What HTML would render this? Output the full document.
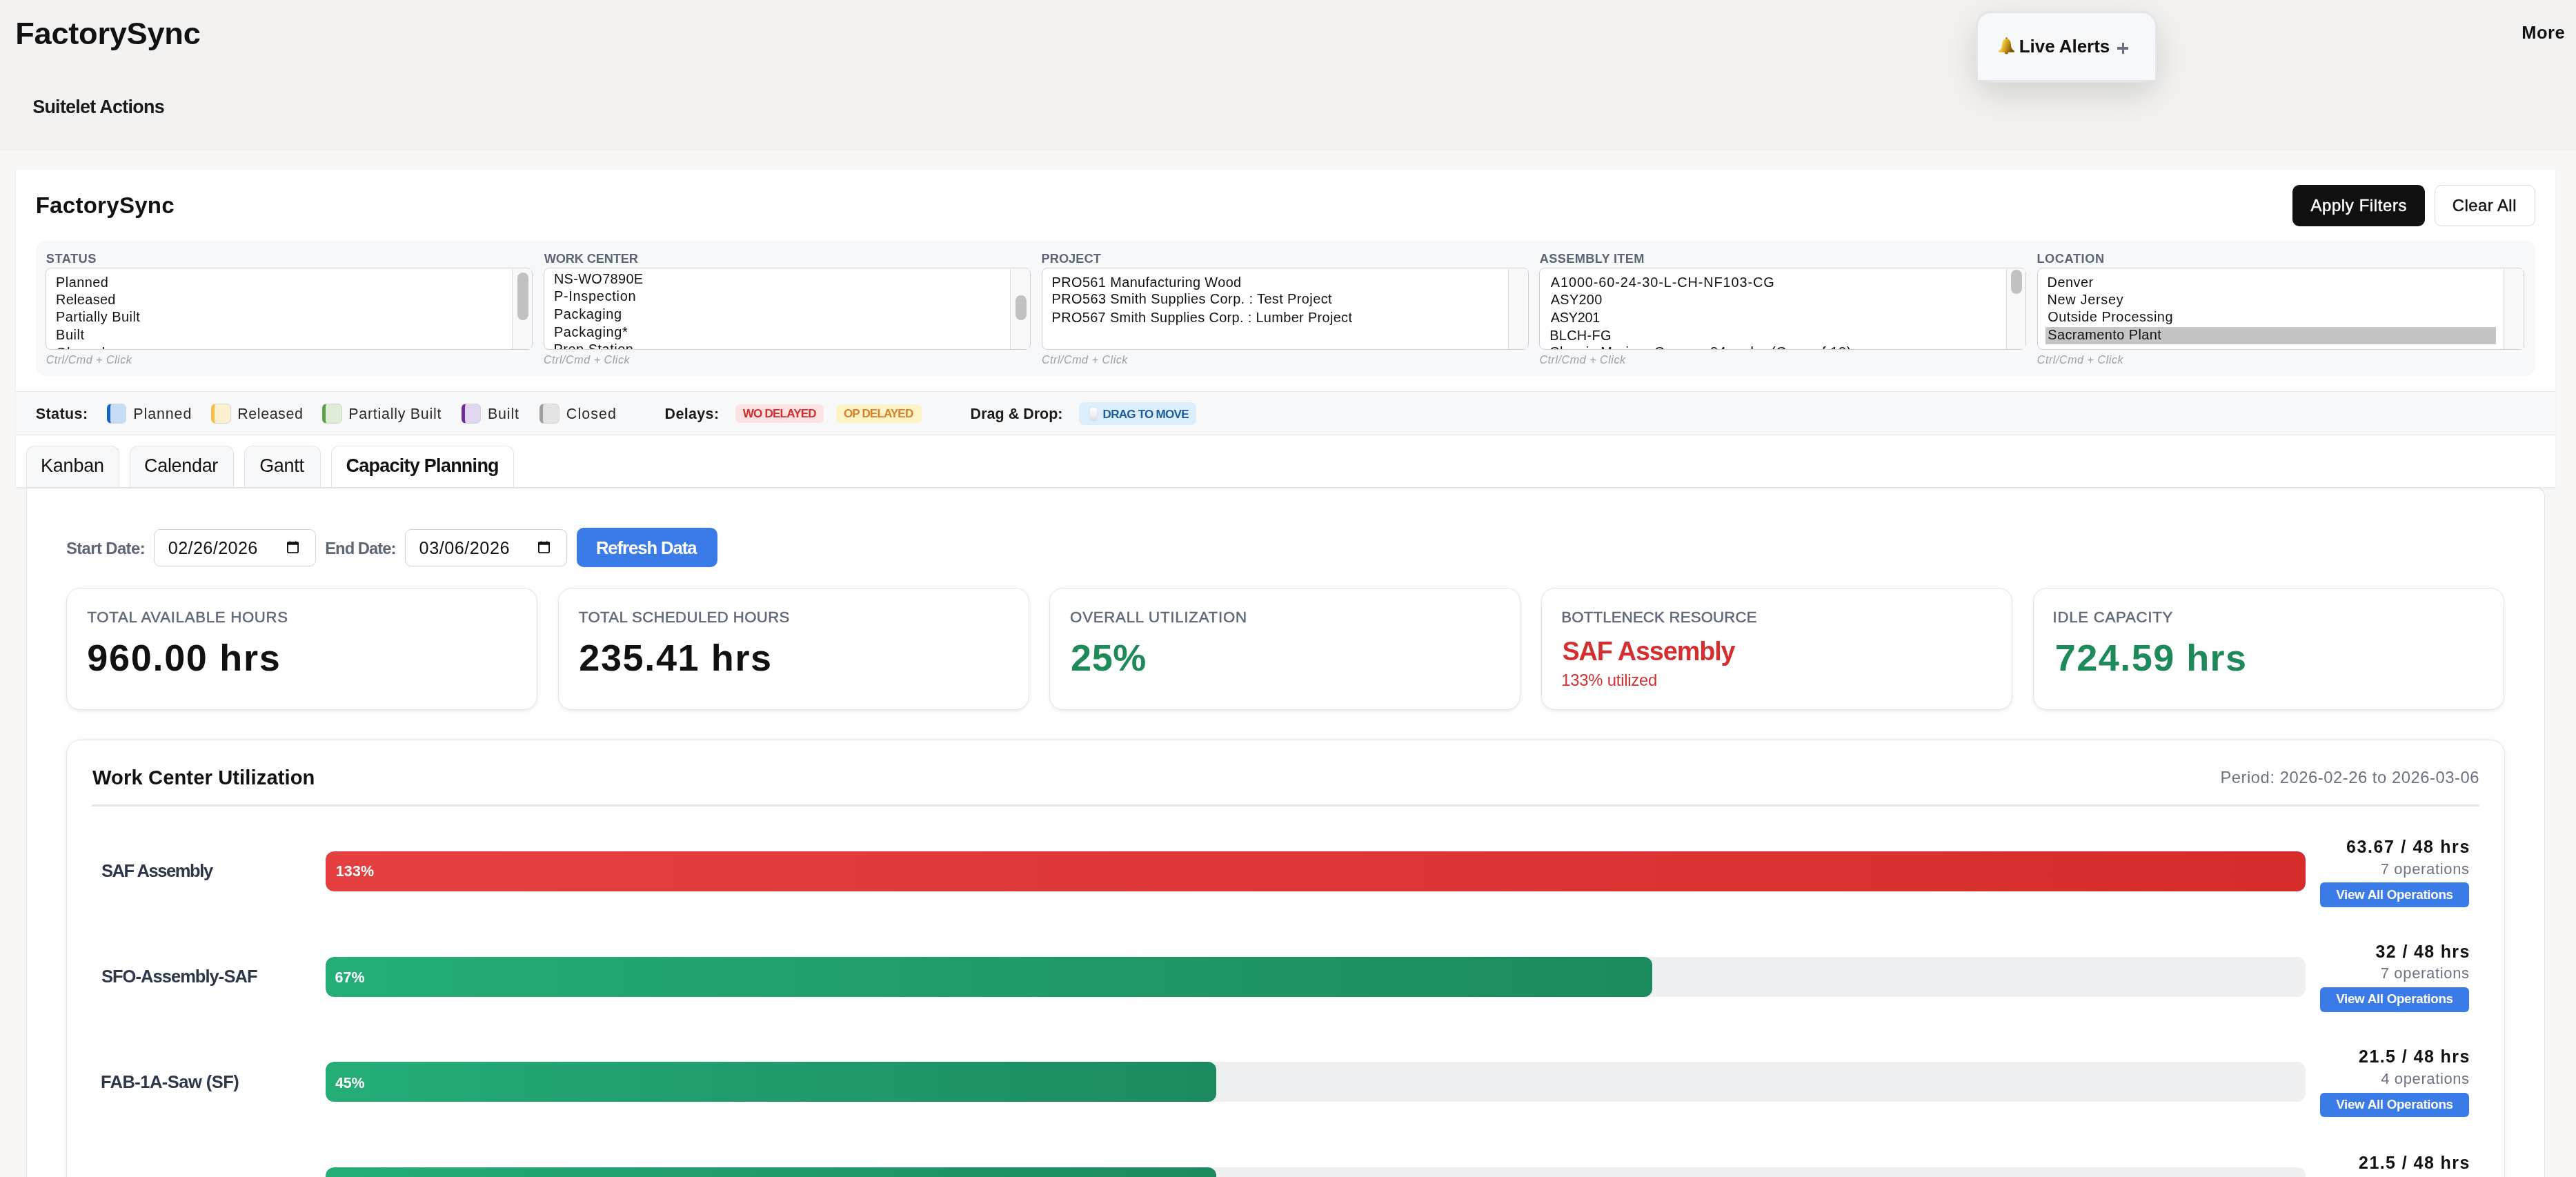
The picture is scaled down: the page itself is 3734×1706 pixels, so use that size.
<!DOCTYPE html>
<html><head><meta charset="utf-8">
<style>
html,body{margin:0;padding:0;}
body{width:3734px;height:1706px;overflow:hidden;position:relative;background:#f8f7f5;font-family:"Liberation Sans",sans-serif;}
.a{position:absolute;box-sizing:border-box;}
.t{position:absolute;white-space:pre;font-family:"Liberation Sans",sans-serif;}
.sel{position:absolute;box-sizing:border-box;background:#fff;border:1.5px solid #c9ced7;border-radius:8px;overflow:hidden;will-change:transform;}
.track{position:absolute;box-sizing:border-box;width:28px;background:#f8f8f8;border-left:1.5px solid #dadada;}
.thumb{position:absolute;left:6.9px;width:16px;border-radius:8px;background:#c1c1c1;}
.sw{position:absolute;box-sizing:border-box;width:28.6px;height:28.2px;border-radius:6.5px;border:1px solid #d3d3d3;border-left-width:5px;}
.tab{position:absolute;box-sizing:border-box;top:646.4px;height:61px;border:1.5px solid #e1e4e9;border-bottom:none;border-radius:12px 12px 0 0;background:#f7f8fa;}
.kpi{position:absolute;box-sizing:border-box;top:851.6px;width:683px;height:177px;border:1.5px solid #e1e4ea;border-radius:20px;background:#fff;box-shadow:0 2px 5px rgba(0,0,0,0.07);}
.bar{position:absolute;left:471.6px;width:2870.4px;height:57.5px;border-radius:12px;background:#eff0f2;overflow:hidden;}
.fillg{position:absolute;left:0;top:0;bottom:0;border-radius:12px;background:linear-gradient(90deg,#25ad78,#1b8a5f);}
.btn{position:absolute;box-sizing:border-box;left:3363px;width:215.8px;height:35.3px;border-radius:6px;background:#3b7be8;}
</style></head><body>
<!-- header -->
<div class="a" style="left:0;top:0;width:3734px;height:218px;background:#f3f2f0"></div>
<div class="a" style="left:2863.5px;top:16px;width:263.3px;height:103.6px;border-radius:22px;background:#e3e5ea;box-shadow:0 16px 48px rgba(0,0,0,0.15)"></div>
<div class="a" style="left:2866.5px;top:19px;width:257.3px;height:97.2px;border-radius:19px 19px 0 0;background:#f7f8fa"></div>
<div class="a" style="left:2896px;top:54px;width:25px;height:25px;">
<svg width="25" height="25" viewBox="0 0 25 25"><defs><linearGradient id="bg1" x1="0" y1="0" x2="1" y2="0.3"><stop offset="0" stop-color="#8a5a00"/><stop offset="0.3" stop-color="#f5d547"/><stop offset="0.55" stop-color="#d9a520"/><stop offset="1" stop-color="#7a4e05"/></linearGradient></defs>
<ellipse cx="12.5" cy="22.6" rx="2.6" ry="2" fill="#9a6a10"/><circle cx="12.5" cy="1.6" r="1.5" fill="#a87a12"/><path d="M12.5 2.2 C8 2.2 6.2 6.5 6 11 C5.8 15.5 4.5 17.5 0.8 20 Q0.5 21.6 2.5 21.8 L22.5 21.8 Q24.5 21.6 24.2 20 C20.5 17.5 19.2 15.5 19 11 C18.8 6.5 17 2.2 12.5 2.2 Z" fill="url(#bg1)"/></svg></div>
<div class="a" style="left:3069px;top:68.4px;width:16.2px;height:3.2px;background:#687080"></div>
<div class="a" style="left:3075.5px;top:61.9px;width:3.2px;height:16px;background:#687080"></div>
<!-- card -->
<div class="a" style="left:23px;top:246px;width:3681px;height:461px;background:#fff;box-shadow:0 1px 3px rgba(0,0,0,0.05)"></div>
<div class="a" style="left:52px;top:349.2px;width:3623px;height:196px;border-radius:14px;background:#f7f8fa"></div>
<div class="a" style="left:3322.8px;top:268.2px;width:192px;height:59.6px;border-radius:10px;background:#111"></div>
<div class="a" style="left:3529.3px;top:268.2px;width:145.4px;height:59.6px;border-radius:10px;background:#fff;border:1.5px solid #d6dae1"></div>
<div class="sel" style="left:66.2px;top:388.2px;width:705.7px;height:119.4px;"><span class="t" style="left:13.90px;top:113.04px;font-size:19.92px;line-height:19.92px;letter-spacing:1.837px;color:#111;font-weight:400;">Closed</span></div><div class="track" style="left:742.4px;top:389.7px;height:116.4px"><div class="thumb" style="top:5.3px;height:69.5px"></div></div><div class="sel" style="left:787.9px;top:388.2px;width:705.7px;height:119.4px;"><span class="t" style="left:13.50px;top:107.74px;font-size:19.92px;line-height:19.92px;letter-spacing:0.525px;color:#111;font-weight:400;">Prep Station</span></div><div class="track" style="left:1464.1px;top:389.7px;height:116.4px"><div class="thumb" style="top:38.2px;height:35.7px"></div></div><div class="sel" style="left:1509.6px;top:388.2px;width:705.7px;height:119.4px;"></div><div class="track" style="left:2185.8px;top:389.7px;height:116.4px"></div><div class="sel" style="left:2231.3px;top:388.2px;width:705.7px;height:119.4px;"><span class="t" style="left:14.00px;top:112.44px;font-size:19.92px;line-height:19.92px;letter-spacing:0.584px;color:#111;font-weight:400;">Classic Mariner Canoe - 24 cedar (Case of 12)</span></div><div class="track" style="left:2907.5px;top:389.7px;height:116.4px"><div class="thumb" style="top:1.3px;height:35px"></div></div><div class="sel" style="left:2953.0px;top:388.2px;width:705.7px;height:119.4px;"><div style="position:absolute;left:10.5px;top:84.7px;width:653.8px;height:25.2px;background:#c5c5c5"></div></div><div class="track" style="left:3629.2px;top:389.7px;height:116.4px"></div>
<!-- legend -->
<div class="a" style="left:23px;top:567px;width:3681px;height:63.8px;background:#f7f8fa;border-top:1.5px solid #e3e6eb;border-bottom:1.5px solid #e3e6eb"></div>
<div class="sw" style="left:154.8px;top:585.4px;background:#c6def5;border-left-color: #1565c0"></div>
<div class="sw" style="left:306.2px;top:585.4px;background:#fdf0cf;border-left-color: #f5bf45"></div>
<div class="sw" style="left:467.2px;top:585.4px;background:#dcecd5;border-left-color: #5a9e47"></div>
<div class="sw" style="left:668.8px;top:585.4px;background:#e1d5ef;border-left-color: #6a2c9a"></div>
<div class="sw" style="left:782px;top:585.4px;background:#e3e3e3;border-left-color: #9e9e9e"></div>
<div class="a" style="left:1065.7px;top:585.8px;width:128px;height:27px;border-radius:7px;background:#fde2e2"></div>
<div class="a" style="left:1212px;top:585.8px;width:123.7px;height:27px;border-radius:7px;background:#fef2c7"></div>
<div class="a" style="left:1564.2px;top:583px;width:170.2px;height:33px;border-radius:8px;background:#dcedfb"></div>
<div class="a" style="left:1579.4px;top:590.3px;width:11.2px;height:19px;border-radius:4px;background:linear-gradient(180deg,#ffffff,#f1f2f4 55%,#dfe0e3);border:0.6px solid #e6e6e6;box-shadow:0 0.5px 1px rgba(0,0,0,0.08)"></div>
<!-- tabs -->
<div class="a" style="left:23px;top:705.8px;width:3681px;height:1.2px;background:#e5e7eb"></div>
<div class="tab" style="left:38.4px;width:134.2px"></div>
<div class="tab" style="left:187.6px;width:151.7px"></div>
<div class="tab" style="left:354.3px;width:110.4px"></div>
<div class="tab" style="left:480.4px;width:264.2px;background:#fff"></div>
<!-- content panel -->
<div class="a" style="left:38.3px;top:706px;width:3650.7px;height:1100px;background:#fefefe;border:1.5px solid #e1e4e9;border-top:2px solid #dfe2e8;border-radius:0 13px 0 0"></div>
<!-- date row -->
<div class="a" style="left:222.8px;top:766.6px;width:235.4px;height:54.8px;border-radius:9px;border:1.5px solid #cdd2da;background:#fff"></div>
<div class="a" style="left:586.6px;top:766.6px;width:235.4px;height:54.8px;border-radius:9px;border:1.5px solid #cdd2da;background:#fff"></div>
<svg class="a" style="left:416.2px;top:783.2px" width="17" height="19" viewBox="0 0 17 19"><rect x="0.95" y="3.4" width="15.1" height="14.7" rx="1.6" fill="none" stroke="#111" stroke-width="1.9"/><rect x="0" y="2.5" width="17" height="4.2" rx="1" fill="#111"/><path d="M3.3 3 L4.1 0.3 L5 3 Z M11.9 3 L12.8 0.3 L13.7 3 Z" fill="#111"/></svg>
<svg class="a" style="left:779.9px;top:783.2px" width="17" height="19" viewBox="0 0 17 19"><rect x="0.95" y="3.4" width="15.1" height="14.7" rx="1.6" fill="none" stroke="#111" stroke-width="1.9"/><rect x="0" y="2.5" width="17" height="4.2" rx="1" fill="#111"/><path d="M3.3 3 L4.1 0.3 L5 3 Z M11.9 3 L12.8 0.3 L13.7 3 Z" fill="#111"/></svg>
<div class="a" style="left:836px;top:765px;width:203.7px;height:57.2px;border-radius:10px;background:#3b7be8"></div>
<!-- KPI cards -->
<div class="kpi" style="left:95.7px"></div>
<div class="kpi" style="left:808.6px"></div>
<div class="kpi" style="left:1521.4px"></div>
<div class="kpi" style="left:2234.2px"></div>
<div class="kpi" style="left:2947.0px"></div>
<!-- WCU card -->
<div class="a" style="left:95.7px;top:1071.5px;width:3535.7px;height:800px;border-radius:21px;border:1.5px solid #e1e4ea;background:#fff;box-shadow:0 1px 6px rgba(0,0,0,0.07)"></div>
<div class="a" style="left:133px;top:1166px;width:3461px;height:3px;background:#e3e6eb"></div>
<div class="bar" style="top:1234.2px"><div class="fillg" style="width:100%;background:linear-gradient(90deg,#e53f3f,#d62c2c)"></div></div>
<div class="bar" style="top:1387.3px"><div class="fillg" style="width:1923.4px"></div></div>
<div class="bar" style="top:1539.3px"><div class="fillg" style="width:1291.6px"></div></div>
<div class="bar" style="top:1692.2px"><div class="fillg" style="width:1291.6px"></div></div>
<div class="btn" style="top:1279.4px"></div>
<div class="btn" style="top:1431.3px"></div>
<div class="btn" style="top:1584px"></div>
<div class="btn" style="top:1737px"></div>
<div id="tx" style="position:absolute;left:0;top:0;width:3734px;height:1706px;will-change:transform">
<span class="t" style="left:22.28px;top:25.97px;font-size:45.16px;line-height:45.16px;letter-spacing:-0.253px;color:#111;font-weight:700;">FactorySync</span>
<span class="t" style="left:47.18px;top:141.71px;font-size:26.93px;line-height:26.93px;letter-spacing:-0.725px;color:#1a1a1a;font-weight:700;">Suitelet Actions</span>
<span class="t" style="left:2926.77px;top:54.32px;font-size:26.09px;line-height:26.09px;letter-spacing:-0.090px;color:#111;font-weight:700;">Live Alerts</span>
<span class="t" style="left:3655.20px;top:35.29px;font-size:25.53px;line-height:25.53px;letter-spacing:0.537px;color:#111;font-weight:700;">More</span>
<span class="t" style="left:51.63px;top:280.78px;font-size:33.10px;line-height:33.10px;letter-spacing:0.252px;color:#111;font-weight:700;">FactorySync</span>
<span class="t" style="left:3349.50px;top:285.82px;font-size:23.84px;line-height:23.84px;letter-spacing:0.655px;color:#fff;font-weight:400;-webkit-text-stroke:0.45px #fff;">Apply Filters</span>
<span class="t" style="left:3554.80px;top:285.82px;font-size:23.84px;line-height:23.84px;letter-spacing:0.488px;color:#111;font-weight:400;-webkit-text-stroke:0.45px #111;">Clear All</span>
<span class="t" style="left:66.80px;top:365.57px;font-size:18.23px;line-height:18.23px;letter-spacing:0.488px;color:#5b6574;font-weight:700;">STATUS</span>
<span class="t" style="left:788.70px;top:365.57px;font-size:18.23px;line-height:18.23px;letter-spacing:-0.147px;color:#5b6574;font-weight:700;">WORK CENTER</span>
<span class="t" style="left:1509.50px;top:365.57px;font-size:18.23px;line-height:18.23px;letter-spacing:0.038px;color:#5b6574;font-weight:700;">PROJECT</span>
<span class="t" style="left:2231.80px;top:365.57px;font-size:18.23px;line-height:18.23px;letter-spacing:0.321px;color:#5b6574;font-weight:700;">ASSEMBLY ITEM</span>
<span class="t" style="left:2952.40px;top:365.57px;font-size:18.23px;line-height:18.23px;letter-spacing:0.560px;color:#5b6574;font-weight:700;">LOCATION</span>
<span class="t" style="left:81.00px;top:399.84px;font-size:19.92px;line-height:19.92px;letter-spacing:0.465px;color:#111;font-weight:400;">Planned</span>
<span class="t" style="left:81.00px;top:424.84px;font-size:19.92px;line-height:19.92px;letter-spacing:0.334px;color:#111;font-weight:400;">Released</span>
<span class="t" style="left:81.00px;top:450.14px;font-size:19.92px;line-height:19.92px;letter-spacing:0.488px;color:#111;font-weight:400;">Partially Built</span>
<span class="t" style="left:81.00px;top:476.04px;font-size:19.92px;line-height:19.92px;letter-spacing:0.598px;color:#111;font-weight:400;">Built</span>
<span class="t" style="left:802.90px;top:394.64px;font-size:19.92px;line-height:19.92px;letter-spacing:0.346px;color:#111;font-weight:400;">NS-WO7890E</span>
<span class="t" style="left:802.90px;top:420.34px;font-size:19.92px;line-height:19.92px;letter-spacing:0.735px;color:#111;font-weight:400;">P-Inspection</span>
<span class="t" style="left:802.90px;top:445.54px;font-size:19.92px;line-height:19.92px;letter-spacing:0.647px;color:#111;font-weight:400;">Packaging</span>
<span class="t" style="left:802.90px;top:471.54px;font-size:19.92px;line-height:19.92px;letter-spacing:0.689px;color:#111;font-weight:400;">Packaging*</span>
<span class="t" style="left:1524.60px;top:400.14px;font-size:19.92px;line-height:19.92px;letter-spacing:0.391px;color:#111;font-weight:400;">PRO561 Manufacturing Wood</span>
<span class="t" style="left:1524.60px;top:424.44px;font-size:19.92px;line-height:19.92px;letter-spacing:0.411px;color:#111;font-weight:400;">PRO563 Smith Supplies Corp. : Test Project</span>
<span class="t" style="left:1524.60px;top:450.64px;font-size:19.92px;line-height:19.92px;letter-spacing:0.347px;color:#111;font-weight:400;">PRO567 Smith Supplies Corp. : Lumber Project</span>
<span class="t" style="left:2247.80px;top:399.74px;font-size:19.92px;line-height:19.92px;letter-spacing:0.891px;color:#111;font-weight:400;">A1000-60-24-30-L-CH-NF103-CG</span>
<span class="t" style="left:2247.80px;top:424.84px;font-size:19.92px;line-height:19.92px;letter-spacing:0.280px;color:#111;font-weight:400;">ASY200</span>
<span class="t" style="left:2247.80px;top:450.54px;font-size:19.92px;line-height:19.92px;letter-spacing:-0.280px;color:#111;font-weight:400;">ASY201</span>
<span class="t" style="left:2246.20px;top:476.84px;font-size:19.92px;line-height:19.92px;letter-spacing:0.314px;color:#111;font-weight:400;">BLCH-FG</span>
<span class="t" style="left:2967.50px;top:400.14px;font-size:19.92px;line-height:19.92px;letter-spacing:0.507px;color:#111;font-weight:400;">Denver</span>
<span class="t" style="left:2967.50px;top:424.84px;font-size:19.92px;line-height:19.92px;letter-spacing:0.693px;color:#111;font-weight:400;">New Jersey</span>
<span class="t" style="left:2968.20px;top:450.34px;font-size:19.92px;line-height:19.92px;letter-spacing:0.512px;color:#111;font-weight:400;">Outside Processing</span>
<span class="t" style="left:2968.20px;top:475.84px;font-size:19.92px;line-height:19.92px;letter-spacing:0.429px;color:#111;font-weight:400;">Sacramento Plant</span>
<span class="t" style="left:66.70px;top:513.15px;font-size:16.13px;line-height:16.13px;letter-spacing:0.482px;color:#9ba2ae;font-weight:400;font-style:italic;">Ctrl/Cmd + Click</span>
<span class="t" style="left:787.90px;top:513.15px;font-size:16.13px;line-height:16.13px;letter-spacing:0.528px;color:#9ba2ae;font-weight:400;font-style:italic;">Ctrl/Cmd + Click</span>
<span class="t" style="left:1509.90px;top:513.15px;font-size:16.13px;line-height:16.13px;letter-spacing:0.515px;color:#9ba2ae;font-weight:400;font-style:italic;">Ctrl/Cmd + Click</span>
<span class="t" style="left:2231.40px;top:513.15px;font-size:16.13px;line-height:16.13px;letter-spacing:0.528px;color:#9ba2ae;font-weight:400;font-style:italic;">Ctrl/Cmd + Click</span>
<span class="t" style="left:2952.80px;top:513.15px;font-size:16.13px;line-height:16.13px;letter-spacing:0.528px;color:#9ba2ae;font-weight:400;font-style:italic;">Ctrl/Cmd + Click</span>
<span class="t" style="left:51.80px;top:589.64px;font-size:21.46px;line-height:21.46px;letter-spacing:0.420px;color:#1a1a1a;font-weight:700;">Status:</span>
<span class="t" style="left:193.30px;top:589.64px;font-size:21.46px;line-height:21.46px;letter-spacing:0.881px;color:#2a2a2a;font-weight:400;">Planned</span>
<span class="t" style="left:344.30px;top:589.64px;font-size:21.46px;line-height:21.46px;letter-spacing:0.553px;color:#2a2a2a;font-weight:400;">Released</span>
<span class="t" style="left:505.30px;top:589.64px;font-size:21.46px;line-height:21.46px;letter-spacing:0.724px;color:#2a2a2a;font-weight:400;">Partially Built</span>
<span class="t" style="left:706.90px;top:589.64px;font-size:21.46px;line-height:21.46px;letter-spacing:0.855px;color:#2a2a2a;font-weight:400;">Built</span>
<span class="t" style="left:820.80px;top:589.64px;font-size:21.46px;line-height:21.46px;letter-spacing:1.088px;color:#2a2a2a;font-weight:400;">Closed</span>
<span class="t" style="left:963.60px;top:589.64px;font-size:21.46px;line-height:21.46px;letter-spacing:0.351px;color:#1a1a1a;font-weight:700;">Delays:</span>
<span class="t" style="left:1076.80px;top:590.92px;font-size:17.11px;line-height:17.11px;letter-spacing:-0.838px;color:#d42f2f;font-weight:700;">WO DELAYED</span>
<span class="t" style="left:1222.90px;top:590.92px;font-size:17.11px;line-height:17.11px;letter-spacing:-0.889px;color:#d6812a;font-weight:700;">OP DELAYED</span>
<span class="t" style="left:1406.60px;top:589.64px;font-size:21.46px;line-height:21.46px;letter-spacing:0.039px;color:#1a1a1a;font-weight:700;">Drag & Drop:</span>
<span class="t" style="left:1598.60px;top:591.72px;font-size:17.11px;line-height:17.11px;letter-spacing:-0.791px;color:#1c5c9a;font-weight:700;">DRAG TO MOVE</span>
<span class="t" style="left:59.00px;top:662.21px;font-size:26.93px;line-height:26.93px;letter-spacing:-0.165px;color:#111;font-weight:400;">Kanban</span>
<span class="t" style="left:209.04px;top:662.21px;font-size:26.93px;line-height:26.93px;letter-spacing:-0.283px;color:#111;font-weight:400;">Calendar</span>
<span class="t" style="left:376.14px;top:662.21px;font-size:26.93px;line-height:26.93px;letter-spacing:-0.273px;color:#111;font-weight:400;">Gantt</span>
<span class="t" style="left:501.56px;top:662.21px;font-size:26.93px;line-height:26.93px;letter-spacing:-0.710px;color:#111;font-weight:700;">Capacity Planning</span>
<span class="t" style="left:95.90px;top:782.82px;font-size:23.84px;line-height:23.84px;letter-spacing:-0.581px;color:#5c6674;font-weight:700;">Start Date:</span>
<span class="t" style="left:243.80px;top:781.63px;font-size:25.25px;line-height:25.25px;letter-spacing:0.355px;color:#111;font-weight:400;">02/26/2026</span>
<span class="t" style="left:471.20px;top:782.82px;font-size:23.84px;line-height:23.84px;letter-spacing:-1.003px;color:#5c6674;font-weight:700;">End Date:</span>
<span class="t" style="left:607.60px;top:781.63px;font-size:25.25px;line-height:25.25px;letter-spacing:0.500px;color:#111;font-weight:400;">03/06/2026</span>
<span class="t" style="left:863.90px;top:782.07px;font-size:25.67px;line-height:25.67px;letter-spacing:-1.063px;color:#fff;font-weight:700;">Refresh Data</span>
<span class="t" style="left:126.50px;top:884.44px;font-size:22.16px;line-height:22.16px;letter-spacing:0.740px;color:#5f6877;font-weight:400;-webkit-text-stroke:0.5px #5f6877;">TOTAL AVAILABLE HOURS</span>
<span class="t" style="left:838.90px;top:884.44px;font-size:22.16px;line-height:22.16px;letter-spacing:0.396px;color:#5f6877;font-weight:400;-webkit-text-stroke:0.5px #5f6877;">TOTAL SCHEDULED HOURS</span>
<span class="t" style="left:1551.10px;top:884.44px;font-size:22.16px;line-height:22.16px;letter-spacing:0.809px;color:#5f6877;font-weight:400;-webkit-text-stroke:0.5px #5f6877;">OVERALL UTILIZATION</span>
<span class="t" style="left:2263.20px;top:884.44px;font-size:22.16px;line-height:22.16px;letter-spacing:0.216px;color:#5f6877;font-weight:400;-webkit-text-stroke:0.5px #5f6877;">BOTTLENECK RESOURCE</span>
<span class="t" style="left:2975.60px;top:884.44px;font-size:22.16px;line-height:22.16px;letter-spacing:0.758px;color:#5f6877;font-weight:400;-webkit-text-stroke:0.5px #5f6877;">IDLE CAPACITY</span>
<span class="t" style="left:126.31px;top:926.29px;font-size:54.00px;line-height:54.00px;letter-spacing:1.688px;color:#111;font-weight:700;">960.00 hrs</span>
<span class="t" style="left:839.31px;top:926.29px;font-size:54.00px;line-height:54.00px;letter-spacing:1.621px;color:#111;font-weight:700;">235.41 hrs</span>
<span class="t" style="left:1552.11px;top:926.29px;font-size:54.00px;line-height:54.00px;letter-spacing:0.489px;color:#1e8a5a;font-weight:700;">25%</span>
<span class="t" style="left:2978.71px;top:926.09px;font-size:54.00px;line-height:54.00px;letter-spacing:1.466px;color:#1e8a5a;font-weight:700;">724.59 hrs</span>
<span class="t" style="left:2264.41px;top:925.84px;font-size:37.87px;line-height:37.87px;letter-spacing:-1.138px;color:#d32f2f;font-weight:700;">SAF Assembly</span>
<span class="t" style="left:2263.20px;top:974.02px;font-size:23.84px;line-height:23.84px;letter-spacing:-0.213px;color:#d32f2f;font-weight:400;">133% utilized</span>
<span class="t" style="left:134.00px;top:1112.71px;font-size:29.17px;line-height:29.17px;letter-spacing:0.101px;color:#111;font-weight:700;">Work Center Utilization</span>
<span class="t" style="left:3218.40px;top:1115.32px;font-size:23.84px;line-height:23.84px;letter-spacing:0.518px;color:#6b7280;font-weight:400;">Period: 2026-02-26 to 2026-03-06</span>
<span class="t" style="left:146.90px;top:1249.99px;font-size:25.53px;line-height:25.53px;letter-spacing:-1.413px;color:#2d3748;font-weight:700;">SAF Assembly</span>
<span class="t" style="left:146.90px;top:1403.19px;font-size:25.53px;line-height:25.53px;letter-spacing:-0.962px;color:#2d3748;font-weight:700;">SFO-Assembly-SAF</span>
<span class="t" style="left:145.90px;top:1556.39px;font-size:25.53px;line-height:25.53px;letter-spacing:-0.533px;color:#2d3748;font-weight:700;">FAB-1A-Saw (SF)</span>
<span class="t" style="left:486.70px;top:1253.24px;font-size:21.46px;line-height:21.46px;letter-spacing:0.200px;color:#fff;font-weight:700;">133%</span>
<span class="t" style="left:485.50px;top:1407.24px;font-size:21.46px;line-height:21.46px;letter-spacing:0.116px;color:#fff;font-weight:700;">67%</span>
<span class="t" style="left:485.90px;top:1560.34px;font-size:21.46px;line-height:21.46px;letter-spacing:-0.084px;color:#fff;font-weight:700;">45%</span>
<span class="t" style="left:3400.90px;top:1214.67px;font-size:24.96px;line-height:24.96px;letter-spacing:1.666px;color:#111;font-weight:700;">63.67 / 48 hrs</span>
<span class="t" style="left:3450.70px;top:1248.56px;font-size:22.02px;line-height:22.02px;letter-spacing:0.656px;color:#6b7280;font-weight:400;">7 operations</span>
<span class="t" style="left:3386.20px;top:1287.69px;font-size:18.79px;line-height:18.79px;letter-spacing:-0.305px;color:#fff;font-weight:700;">View All Operations</span>
<span class="t" style="left:3443.60px;top:1367.07px;font-size:24.96px;line-height:24.96px;letter-spacing:1.366px;color:#111;font-weight:700;">32 / 48 hrs</span>
<span class="t" style="left:3450.70px;top:1400.06px;font-size:22.02px;line-height:22.02px;letter-spacing:0.656px;color:#6b7280;font-weight:400;">7 operations</span>
<span class="t" style="left:3386.20px;top:1439.09px;font-size:18.79px;line-height:18.79px;letter-spacing:-0.305px;color:#fff;font-weight:700;">View All Operations</span>
<span class="t" style="left:3419.10px;top:1519.37px;font-size:24.96px;line-height:24.96px;letter-spacing:1.445px;color:#111;font-weight:700;">21.5 / 48 hrs</span>
<span class="t" style="left:3451.30px;top:1552.96px;font-size:22.02px;line-height:22.02px;letter-spacing:0.602px;color:#6b7280;font-weight:400;">4 operations</span>
<span class="t" style="left:3386.20px;top:1591.69px;font-size:18.79px;line-height:18.79px;letter-spacing:-0.305px;color:#fff;font-weight:700;">View All Operations</span>
<span class="t" style="left:3419.10px;top:1673.27px;font-size:24.96px;line-height:24.96px;letter-spacing:1.445px;color:#111;font-weight:700;">21.5 / 48 hrs</span>
<span class="t" style="left:3451.30px;top:1706.36px;font-size:22.02px;line-height:22.02px;letter-spacing:0.602px;color:#6b7280;font-weight:400;">4 operations</span>
<span class="t" style="left:3386.20px;top:1744.09px;font-size:18.79px;line-height:18.79px;letter-spacing:-0.305px;color:#fff;font-weight:700;">View All Operations</span>
</div>
</body></html>
